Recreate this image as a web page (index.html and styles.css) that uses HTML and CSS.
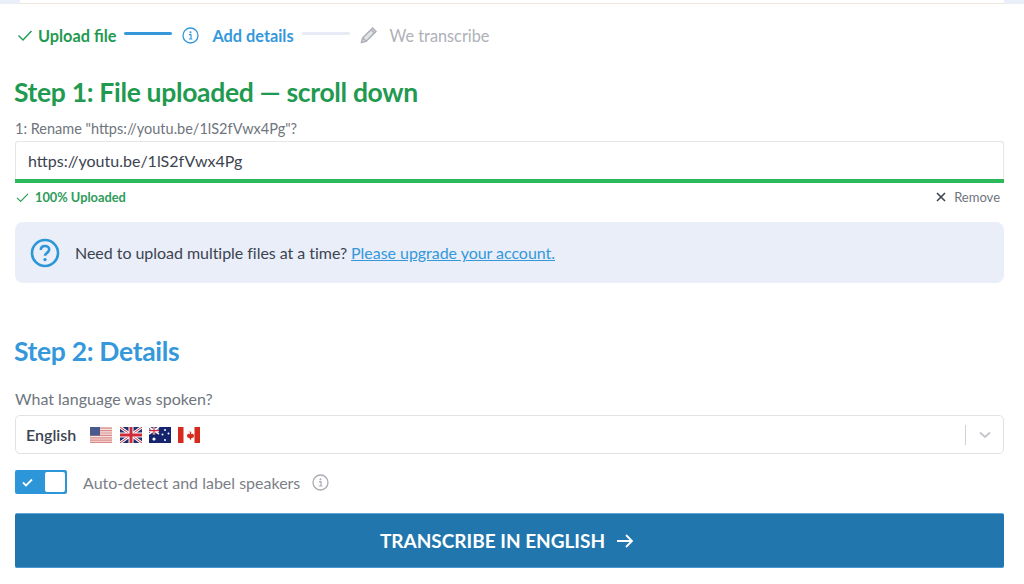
FILE: index.html
```html
<!DOCTYPE html>
<html lang="en">
<head>
    <meta charset="UTF-8">
    <meta name="viewport" content="width=device-width, initial-scale=1.0">
    <title>Upload file</title>
    <link rel="stylesheet" href="styles.css">
</head>
<body>
    <div class="top-strip"><div class="top-card"></div></div>

    <div class="steps">
        <div class="step step-done">
            <svg class="step-check" width="16" height="16" viewBox="0 0 16 16"><path d="M1.5 8.5l4.5 4.5 8.5-9" fill="none" stroke="currentColor" stroke-width="1.4"/></svg>
            <span>Upload file</span>
        </div>
        <div class="step-line step-line-on"></div>
        <div class="step step-active">
            <svg width="17" height="17" viewBox="0 0 17 17"><circle cx="8.5" cy="8.5" r="7.5" fill="none" stroke="currentColor" stroke-width="1.3"/><circle cx="8.5" cy="5.2" r="1" fill="currentColor"/><path d="M7 7.6h2v4.2M6.8 12h3.6" fill="none" stroke="currentColor" stroke-width="1.2"/></svg>
            <span>Add details</span>
        </div>
        <div class="step-line"></div>
        <div class="step step-todo">
            <svg width="18" height="18" viewBox="0 0 18 18"><path d="M1.5 16.5l1.2-4.6L12.6 2l3.4 3.4-9.9 9.9z" fill="currentColor" fill-opacity="0.35" stroke="currentColor" stroke-width="1.5"/><path d="M2.7 11.9l3.4 3.4M11 3.6l3.4 3.4" stroke="currentColor" stroke-width="1.5"/></svg>
            <span>We transcribe</span>
        </div>
    </div>

    <h2 class="heading heading-green">Step 1: File uploaded — scroll down</h2>

    <label class="rename-label" for="fileName">1: Rename "https://youtu.be/1lS2fVwx4Pg"?</label>
    <input class="rename-input" id="fileName" type="text" value="https://youtu.be/1lS2fVwx4Pg">
    <div class="progress"></div>
    <div class="upload-status">
        <div class="uploaded">
            <svg width="13" height="13" viewBox="0 0 13 13"><path d="M1 6.8l3.6 3.6L12 2.8" fill="none" stroke="currentColor" stroke-width="1.2"/></svg>
            <span>100% Uploaded</span>
        </div>
        <div class="remove">
            <svg width="10" height="10" viewBox="0 0 10 10"><path d="M1 1l8 8M9 1l-8 8" fill="none" stroke="currentColor" stroke-width="1.6"/></svg>
            <span>Remove</span>
        </div>
    </div>

    <div class="notice">
        <svg width="30" height="30" viewBox="0 0 30 30"><circle cx="15" cy="15" r="13" fill="none" stroke="#2d96d6" stroke-width="2.6"/><path d="M10.8 12c0-2.6 1.9-4 4.2-4s4.2 1.4 4.2 3.6c0 3.4-4.2 3.2-4.2 6.2" fill="none" stroke="#2d96d6" stroke-width="2.6"/><circle cx="15" cy="21.6" r="1.7" fill="#2d96d6"/></svg>
        <p>Need to upload multiple files at a time? <a href="#">Please upgrade your account.</a></p>
    </div>

    <h2 class="heading heading-blue">Step 2: Details</h2>

    <div class="language-label">What language was spoken?</div>
    <div class="language-select">
        <span class="language-name">English</span>
        <svg class="flag" width="22" height="16" viewBox="0 0 22 16">
            <rect width="22" height="16" fill="#f6e4e2"/>
            <path d="M0 1.2h22M0 3.6h22M0 6h22M0 8.4h22M0 10.8h22M0 13.2h22M0 15.4h22" stroke="#d98a88" stroke-width="1.2"/>
            <rect width="10" height="8.6" fill="#4a5a8c"/>
        </svg>
        <svg class="flag" width="22" height="16" viewBox="0 0 22 16">
            <rect width="22" height="16" fill="#1f2f6f"/>
            <path d="M0 0l22 16M22 0L0 16" stroke="#fff" stroke-width="3"/>
            <path d="M0 0l22 16M22 0L0 16" stroke="#cf2b3a" stroke-width="1"/>
            <path d="M11 0v16M0 8h22" stroke="#fff" stroke-width="5"/>
            <path d="M11 0v16M0 8h22" stroke="#cf2b3a" stroke-width="3"/>
        </svg>
        <svg class="flag" width="22" height="16" viewBox="0 0 22 16">
            <rect width="22" height="16" fill="#14246e"/>
            <path d="M0 0l10 7M10 0L0 7" stroke="#fff" stroke-width="1.6"/>
            <path d="M5 0v7.5M0 3.7h10" stroke="#fff" stroke-width="2.4"/>
            <path d="M5 0v7.5M0 3.7h10" stroke="#cf2b3a" stroke-width="1.2"/>
            <circle cx="5" cy="12" r="1.6" fill="#fff"/>
            <circle cx="16" cy="3" r="1" fill="#fff"/>
            <circle cx="19.5" cy="6.5" r="1" fill="#fff"/>
            <circle cx="13.5" cy="7.5" r="1" fill="#fff"/>
            <circle cx="16" cy="13" r="1" fill="#fff"/>
        </svg>
        <svg class="flag" width="22" height="16" viewBox="0 0 22 16">
            <rect width="22" height="16" fill="#fff"/>
            <rect width="5.5" height="16" fill="#d52b1e"/>
            <rect x="16.5" width="5.5" height="16" fill="#d52b1e"/>
            <path d="M11 3l1.2 2.2 1.2-.6-.4 2.6 1.6-.8.4 1.2 1.4-.2-.8 2.2.6.4-3.2 1.4.2 1.4h-1.4l.2-1.4-3.2-1.4.6-.4-.8-2.2 1.4.2.4-1.2 1.6.8-.4-2.6 1.2.6z" fill="#d52b1e"/>
        </svg>
        <div class="select-end">
            <div class="select-divider"></div>
            <svg width="12" height="8" viewBox="0 0 12 8"><path d="M1 1.5l5 4.5 5-4.5" fill="none" stroke="#c4c7cc" stroke-width="2"/></svg>
        </div>
    </div>

    <div class="speakers">
        <div class="toggle">
            <svg width="11" height="9" viewBox="0 0 11 9"><path d="M1 4.5l3 3 6-6" fill="none" stroke="#fff" stroke-width="1.8"/></svg>
            <div class="toggle-knob"></div>
        </div>
        <span class="speakers-text">Auto-detect and label speakers</span>
        <svg width="17" height="17" viewBox="0 0 17 17"><circle cx="8.5" cy="8.5" r="7.5" fill="none" stroke="#a9adb3" stroke-width="1.3"/><circle cx="8.5" cy="5.2" r="1" fill="#a9adb3"/><path d="M7 7.6h2v4.2M6.8 12h3.6" fill="none" stroke="#a9adb3" stroke-width="1.2"/></svg>
    </div>

    <button class="transcribe-button" type="button">
        <span>TRANSCRIBE IN ENGLISH</span>
        <svg width="18" height="16" viewBox="0 0 18 16"><path d="M1 8h15M10 2l6 6-6 6" fill="none" stroke="#fff" stroke-width="1.8"/></svg>
    </button>
</body>
</html>
```

FILE: styles.css
```css
body {
    font-family: 'Lato', sans-serif;
    margin: 0;
    padding: 0 20px 0 15px;
    height: 584px;
    box-sizing: border-box;
    overflow: hidden;
    color: #3c4450;
    background-color: #fff;
}

.top-strip {
    margin: 0 -20px 0 -15px;
    height: 4px;
    background-color: #eaeef8;
    padding: 0 20px;
}

.top-card {
    height: 3px;
    background-color: #fff;
    border-bottom: 1px solid #ece6dc;
}

.steps {
    display: flex;
    align-items: center;
    height: 20px;
    margin: 21px 0 0 2px;
    font-size: 16.3px;
    font-weight: 700;
}

.step {
    display: flex;
    align-items: center;
}

.step-done {
    color: #1f9a50;
    gap: 5px;
}

.step-active {
    color: #3498db;
    gap: 13px;
}

.step-todo {
    color: #aeb1b8;
    font-weight: 400;
    gap: 12px;
}

.step-line {
    width: 48px;
    height: 3px;
    margin: -3px 10px 0 8px;
    background-color: #e6ebf6;
    border-radius: 2px;
}

.step-line-on {
    background-color: #3498db;
}

.heading {
    font-size: 26.5px;
    font-weight: 700;
    line-height: 32px;
    letter-spacing: -0.33px;
    margin: 0 0 0 -1px;
}

.heading-green {
    color: #1f9a50;
    margin-top: 31px;
}

.heading-blue {
    color: #3498db;
    margin-top: 52px;
}

.rename-label {
    display: block;
    font-size: 14.5px;
    line-height: 16px;
    margin-top: 13px;
    color: #6f757d;
}

.rename-input {
    display: block;
    width: 100%;
    height: 38px;
    box-sizing: border-box;
    margin-top: 4px;
    padding: 0 12px;
    border: 1px solid #e6e6e6;
    border-bottom: none;
    border-radius: 3px 3px 0 0;
    font-family: 'Lato', sans-serif;
    font-size: 16px;
    color: #3c4450;
}

.progress {
    height: 4px;
    background-color: #2cb95c;
}

.upload-status {
    display: flex;
    justify-content: space-between;
    align-items: center;
    height: 16px;
    margin-top: 6px;
    font-size: 12.8px;
}

.uploaded {
    display: flex;
    align-items: center;
    gap: 6px;
    margin-left: 1px;
    color: #2d9c5a;
    font-weight: 700;
}

.remove {
    display: flex;
    align-items: center;
    gap: 8px;
    margin-right: 4px;
    font-size: 13px;
    color: #6f757d;
}

.remove svg {
    color: #3c4450;
}

.notice {
    display: flex;
    align-items: center;
    gap: 15px;
    height: 61px;
    margin-top: 17px;
    padding-left: 15px;
    background-color: #e9eef9;
    border-radius: 8px;
}

.notice p {
    margin: 0;
    font-size: 16px;
    letter-spacing: -0.04px;
}

.notice a {
    color: #3498db;
}

.language-label {
    font-size: 16px;
    line-height: 18px;
    margin-top: 23px;
    color: #6f757d;
}

.language-select {
    display: flex;
    align-items: center;
    box-sizing: border-box;
    height: 39px;
    margin-top: 7px;
    padding: 0 12px 0 10px;
    border: 1px solid #e2e2e2;
    border-radius: 5px;
}

.language-name {
    font-size: 16px;
    font-weight: 600;
    margin-right: 14px;
}

.flag {
    margin-right: 7.4px;
}

.select-end {
    display: flex;
    align-items: center;
    gap: 13px;
    margin-left: auto;
}

.select-divider {
    width: 1px;
    height: 20px;
    background-color: #cfd1d6;
}

.speakers {
    display: flex;
    align-items: center;
    height: 24px;
    margin-top: 16px;
}

.toggle {
    display: flex;
    align-items: center;
    justify-content: space-between;
    box-sizing: border-box;
    width: 52px;
    height: 24px;
    padding: 2px 2px 2px 7px;
    background-color: #2d96d9;
    border-radius: 2px;
}

.toggle-knob {
    width: 20px;
    height: 20px;
    background-color: #fff;
    border-radius: 2px;
}

.speakers-text {
    margin: 0 12px 0 16px;
    font-size: 16px;
    color: #7b8087;
}

.transcribe-button {
    display: flex;
    align-items: center;
    justify-content: center;
    gap: 11px;
    width: 100%;
    height: 55px;
    margin-top: 19px;
    padding: 0 5px 0 0;
    border: none;
    border-top: 1px solid #5fa6d6;
    border-bottom: 1px solid #4a97d0;
    border-radius: 2px;
    background-color: #2176ae;
    color: #fff;
    font-family: 'Lato', sans-serif;
    font-size: 19px;
    font-weight: 700;
}
```
